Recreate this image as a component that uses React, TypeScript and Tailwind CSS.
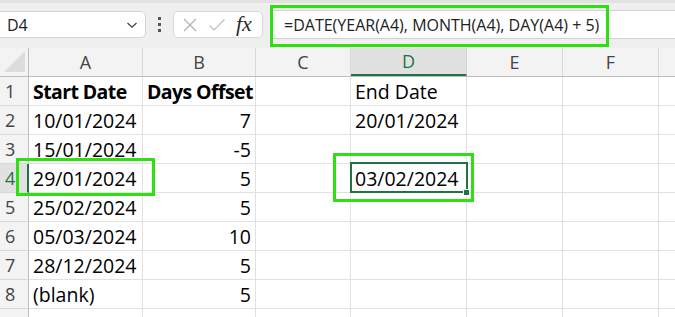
import React from 'react';

const COLS = ['A', 'B', 'C', 'D', 'E', 'F', 'G'];
const WIDTHS = [114, 113, 95, 116, 96, 96, 120];

type Cell = { text: string; bold?: boolean; right?: boolean };

const ROWS: Record<string, Cell>[] = [
  { A: { text: 'Start Date', bold: true }, B: { text: 'Days Offset', bold: true }, D: { text: 'End Date' } },
  { A: { text: '10/01/2024' }, B: { text: '7', right: true }, D: { text: '20/01/2024' } },
  { A: { text: '15/01/2024' }, B: { text: '-5', right: true } },
  { A: { text: '29/01/2024' }, B: { text: '5', right: true }, D: { text: '03/02/2024' } },
  { A: { text: '25/02/2024' }, B: { text: '5', right: true } },
  { A: { text: '05/03/2024' }, B: { text: '10', right: true } },
  { A: { text: '28/12/2024' }, B: { text: '5', right: true } },
  { A: { text: '(blank)' }, B: { text: '5', right: true } },
  {},
];

const Toolbar = () => (
  <div className="relative h-[48px] bg-[#efefef] border-t-[3px] border-[#e2e2e2] flex items-start pt-[8px]">
    {/* Name box */}
    <div className="ml-[-6px] w-[152px] h-[27px] bg-white border border-[#d4d4d4] rounded-[5px] flex items-center justify-between pl-[12px] pr-[7px]">
      <span className="text-[16px] text-[#222] font-['Open_Sans',sans-serif]">D4</span>
      <svg width="12" height="8" viewBox="0 0 12 8" className="mt-[1px]">
        <path d="M1.5 2 L6 6.2 L10.5 2" fill="none" stroke="#444" strokeWidth="1.3" />
      </svg>
    </div>
    <div className="w-[27px] h-[27px] flex flex-col items-center justify-center gap-[3px]">
      <span className="w-[3px] h-[3px] bg-[#555]" />
      <span className="w-[3px] h-[3px] bg-[#555]" />
      <span className="w-[3px] h-[3px] bg-[#555]" />
    </div>
    {/* Cancel / enter / fx */}
    <div className="w-[90px] h-[27px] bg-white border border-[#d8d8d8] rounded-[5px] flex items-center pl-[8px]">
      <svg width="16" height="16" viewBox="0 0 16 16">
        <path d="M2 2 L14 14 M14 2 L2 14" stroke="#b3b3b3" strokeWidth="1.2" />
      </svg>
      <svg width="18" height="16" viewBox="0 0 18 16" className="ml-[10px]">
        <path d="M1.5 8.5 L6 13 L16.5 2.5" fill="none" stroke="#bcbcbc" strokeWidth="1.2" />
      </svg>
      <span className="ml-[10px] text-[22px] italic text-[#2a2a2a] font-['Liberation_Serif',serif] leading-none mt-[-2px]">fx</span>
    </div>
    {/* Formula input */}
    <div className="ml-[8px] flex-1 h-[29px] mt-[-1px] bg-white border-y border-[#d2d2d2] flex items-center pl-[13px]">
      <span className="text-[16px] text-[#222] font-['Open_Sans',sans-serif]">
        =DATE(YEAR(A4), MONTH(A4), DAY(A4) + 5)
      </span>
    </div>
    <div className="absolute left-[270px] top-[2px] w-[339px] h-[42px] border-[3px] border-[#2fe010]" />
  </div>
);

const HeaderRow = () => (
  <div className="flex h-[29px] bg-[#f3f3f3] border-b border-[#bdbdbd]">
    <div className="w-[29px] shrink-0 border-r border-[#bdbdbd] relative">
      <svg width="22" height="22" viewBox="0 0 22 22" className="absolute left-[4px] top-[3px]">
        <path d="M21 0 L21 21 L0 21 Z" fill="#dcdcdc" />
      </svg>
    </div>
    {COLS.map((c, i) => (
      <div
        key={c}
        style={{ width: WIDTHS[i] }}
        className={
          c === 'D'
            ? 'shrink-0 flex items-center justify-center bg-[#e1e1e1] border-r border-[#d4d4d4] border-b-[2px] border-b-[#217346] text-[#217346] text-[18px] font-["Open_Sans",sans-serif]'
            : 'shrink-0 flex items-center justify-center border-r border-[#d8d8d8] text-[#444] text-[18px] font-["Open_Sans",sans-serif]'
        }
      >
        {c !== 'G' ? c : ''}
      </div>
    ))}
  </div>
);

export default function App() {
  return (
    <div className="relative w-[675px] h-[317px] overflow-hidden bg-white font-['Open_Sans',sans-serif]">
      <Toolbar />
      <HeaderRow />
      {ROWS.map((row, r) => (
        <div key={r} className="flex h-[29px]">
          <div
            className={
              r === 3
                ? 'w-[29px] shrink-0 bg-[#e1e1e1] border-r-[2px] border-[#217346] border-b border-b-[#d8d8d8] flex items-center pl-[5px] text-[18px] text-[#217346]'
                : 'w-[29px] shrink-0 bg-[#f3f3f3] border-r border-[#bdbdbd] border-b border-b-[#d8d8d8] flex items-center pl-[5px] text-[18px] text-[#444]'
            }
          >
            {r + 1}
          </div>
          {COLS.map((c, i) => {
            const cell = row[c];
            return (
              <div
                key={c}
                style={{ width: WIDTHS[i] }}
                className={
                  cell?.right
                    ? 'shrink-0 border-r border-b border-[#e1e1e1] flex items-center justify-end pr-[4px] pt-[1px] text-[19.5px] text-black whitespace-nowrap'
                    : 'shrink-0 border-r border-b border-[#e1e1e1] flex items-center pl-[4px] pt-[1px] text-[19.5px] text-black whitespace-nowrap'
                }
              >
                {cell && <span className={cell.bold ? 'font-bold tracking-[-0.6px]' : ''}>{cell.text}</span>}
              </div>
            );
          })}
        </div>
      ))}

      {/* selected cell D4 */}
      <div className="absolute left-[350px] top-[162px] w-[118px] h-[31px] border-[2px] border-[#217346]" />
      <div className="absolute left-[463px] top-[189px] w-[7px] h-[7px] bg-[#217346] border border-white" />

      {/* annotation boxes */}
      <div className="absolute left-[16px] top-[158px] w-[139px] h-[38px] border-[3px] border-[#2fe010]" />
      <div className="absolute left-[333px] top-[153px] w-[141px] h-[49px] border-[3px] border-[#2fe010]" />
    </div>
  );
}
